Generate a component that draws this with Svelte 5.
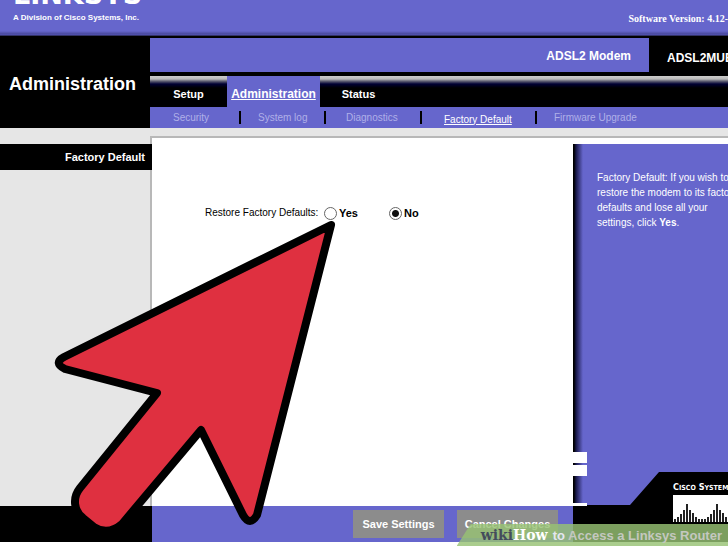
<script>
  const tabs = ['Setup', 'Administration', 'Status'];
  const pages = ['Security', 'System log', 'Diagnostics', 'Factory Default', 'Firmware Upgrade'];
  const bars = [3, 5, 8, 12, 18, 12, 9, 5, 3, 3, 3, 5, 8, 12, 18, 12, 9, 5, 3, 3];
  let restore = $state('no');
</script>

<div class="page">
  <header class="brand">
    <div>
      <div class="logo">LINKSYS</div>
      <div class="division">A Division of Cisco Systems, Inc.</div>
    </div>
    <div class="version">Software Version: 4.12-</div>
  </header>

  <section class="top">
    <h1>Administration</h1>
    <div class="navs">
      <div class="product">
        <div class="modem">ADSL2 Modem</div>
        <div class="model">ADSL2MUE</div>
      </div>
      <nav class="tabs">
        {#each tabs as tab, i}
          <a href="#{tab}" class:active={i === 1}>{tab}</a>
        {/each}
      </nav>
      <nav class="pages">
        {#each pages as page, i}
          <a href="#{page}" class="p{i}" class:current={i === 3}>{page}</a>
          {#if i < 4}<i></i>{/if}
        {/each}
      </nav>
    </div>
  </section>

  <div class="band"><div></div></div>

  <div class="body">
    <aside class="side"><h2>Factory Default</h2></aside>
    <main>
      <fieldset>
        <legend>Restore Factory Defaults:</legend>
        <label><input type="radio" name="restore" value="yes" bind:group={restore} />Yes</label>
        <label><input type="radio" name="restore" value="no" bind:group={restore} />No</label>
      </fieldset>
    </main>
    <aside class="help">
      <p>Factory Default: If you wish to<br />restore the modem to its factory<br />defaults and lose all your<br />settings, click <b>Yes</b>.</p>
      <div class="notches"><span></span><span></span></div>
      <div class="corner">
        <svg viewBox="0 0 155 34" width="155" height="34" aria-hidden="true">
          <path d="M0 33H57L86 0H155V34H0Z" fill="#000" />
          <path d="M0 31H14V34H0Z" fill="#fff" />
        </svg>
      </div>
    </aside>
  </div>

  <footer>
    <div class="foot-left"></div>
    <div class="actions">
      <button type="button">Save Settings</button>
      <button type="button">Cancel Changes</button>
    </div>
    <div class="foot-right"></div>
  </footer>

  <div class="cisco">
    <div>C<small>ISCO</small> S<small>YSTEMS</small></div>
    <svg width="64" height="27" viewBox="0 0 64 27" aria-hidden="true">
      <rect width="64" height="27" fill="#fff" />
      {#each bars as h, i}
        <rect x={1 + i * 3} y={27 - h} width="2" height={h} fill="#222" />
      {/each}
    </svg>
  </div>

  <svg class="pointer" viewBox="0 0 290 320" width="290" height="320" aria-hidden="true">
    <path
      d="M281 15L14 147Q3 153 15 159L107 183L30 278C22 288 24 301 33 308L44 317Q58 326 72 314L151 220L193 305Q200 317 207 305Z"
      transform="translate(0 -5)"
      fill="#df3040"
      stroke="#000"
      stroke-width="8"
      stroke-linejoin="round"
    />
  </svg>

  <div class="caption">
    <span class="wiki">wiki</span><span class="how">How</span><span class="title"><span class="how-to">to</span> Access a Linksys Router</span>
  </div>
</div>

<style>
  :global(body) {
    margin: 0;
    background: #fff;
  }
  .page {
    position: relative;
    overflow: hidden;
    padding-bottom: 4px;
    font-family: 'Liberation Sans', Arial, sans-serif;
    font-size: 12px;
    white-space: nowrap;
  }
  h1, h2, p, fieldset, legend {
    margin: 0;
    padding: 0;
    border: 0;
  }
  a {
    text-decoration: none;
  }
  .brand {
    display: flex;
    justify-content: space-between;
    height: 36px;
    box-sizing: border-box;
    padding-left: 13px;
    background: linear-gradient(#6666cc 31px, #48489c 34px, #5555bb 35px, #111 36px);
    color: #fff;
    font-weight: bold;
    overflow: hidden;
  }
  .logo {
    height: 12px;
    display: flex;
    align-items: flex-end;
    font: bold 27px/34px 'DejaVu Sans', sans-serif;
  }
  .division {
    font-size: 8px;
    line-height: 11px;
  }
  .version {
    padding-top: 12px;
    font: bold 10px/14px 'Liberation Serif', serif;
  }
  .top {
    display: flex;
    background: #000;
    color: #fff;
  }
  h1 {
    width: 150px;
    box-sizing: border-box;
    padding: 36px 0 0 9px;
    font-size: 18px;
    line-height: 24px;
  }
  .navs {
    flex: 1;
    min-width: 0;
  }
  .product {
    display: flex;
    padding: 2px 0 4px;
    font-size: 12px;
    line-height: 36px;
    font-weight: bold;
  }
  .modem {
    flex: 1;
    height: 34px;
    padding-right: 18px;
    background: #6666cc;
    text-align: right;
  }
  .model {
    width: 61px;
    padding-left: 18px;
    line-height: 40px;
    height: 34px;
  }
  .tabs {
    display: flex;
    height: 31px;
    background: linear-gradient(#ccc 0, #bbb 3px, #667 5px, #003 8px, #000 12px);
    font-size: 11px;
    line-height: 37px;
    font-weight: bold;
  }
  .tabs a {
    width: 77px;
    color: #fff;
    text-align: center;
  }
  .tabs a.active {
    width: 93px;
    background: #6666cc;
    font-size: 12px;
    text-decoration: underline;
  }
  .pages {
    display: flex;
    align-items: center;
    height: 21px;
    padding-left: 23px;
    background: #6666cc;
    font-size: 10px;
  }
  .pages a {
    width: 66px;
    color: #b0b0e8;
  }
  .pages i {
    width: 2px;
    height: 13px;
    margin-right: 17px;
    background: #000;
  }
  .pages .p2 {
    width: 74px;
    margin-left: 3px;
  }
  .pages .p3 {
    width: 91px;
    margin-left: 5px;
  }
  .pages .p4 {
    width: auto;
  }
  .pages .current {
    color: #fff;
    line-height: 17px;
    padding-top: 3px;
    text-decoration: underline;
  }
  .band {
    height: 10px;
    padding-left: 150px;
    background: #e6e6e6;
  }
  .band div {
    height: 8px;
    border-bottom: 2px solid #b8b8b8;
  }
  .body {
    display: flex;
    height: 368px;
  }
  .side {
    width: 150px;
    border-right: 2px solid #b8b8b8;
    background: #e6e6e6;
    padding-top: 6px;
  }
  h2 {
    margin-right: -2px;
    padding-right: 7px;
    background: #000;
    color: #fff;
    font-size: 11px;
    line-height: 26px;
    text-align: right;
  }
  main {
    flex: 1;
    padding: 62px 0 0 53px;
  }
  fieldset {
    display: flex;
    align-items: center;
    line-height: 20px;
  }
  legend {
    float: left;
    width: 119px;
    font-size: 10px;
    line-height: 26px;
  }
  label {
    display: flex;
    align-items: center;
    width: 65px;
    font-size: 11px;
    font-weight: bold;
  }
  input {
    appearance: none;
    width: 13px;
    height: 13px;
    margin: 0 2px 0 0;
    border: 1px solid #666;
    border-radius: 50%;
    background: #fff;
  }
  input:checked {
    background: radial-gradient(circle, #111 3px, #fff 4px);
  }
  .help {
    display: flex;
    flex-direction: column;
    width: 155px;
    margin-top: 6px;
    background: linear-gradient(90deg, #000 1px, #181848 3px, #6666cc 10px);
    color: #fff;
    overflow: hidden;
  }
  .help p {
    padding: 26px 0 0 24px;
    font-size: 10px;
    line-height: 15px;
  }
  .notches {
    display: flex;
    flex-direction: column;
    gap: 2px;
    margin-top: auto;
  }
  .notches span {
    width: 14px;
    height: 11px;
    background: #fff;
  }
  .corner {
    display: flex;
    margin-top: -4px;
  }
  footer {
    display: flex;
    height: 36px;
    background: #6666cc;
  }
  .foot-left {
    width: 152px;
    background: #000;
  }
  .foot-right {
    width: 155px;
    background: #000;
  }
  .actions {
    flex: 1;
    display: flex;
    justify-content: flex-end;
    gap: 13px;
    padding: 4px 15px;
  }
  button {
    width: 91px;
    height: 28px;
    border: 0;
    padding: 0;
    background: #8c8c8c;
    color: #fff;
    font: bold 11px 'Liberation Sans', Arial, sans-serif;
  }
  button + button {
    width: 101px;
  }
  .cisco {
    position: absolute;
    right: -9px;
    bottom: 24px;
    width: 64px;
    color: #fff;
    font: bold 9px/13px 'DejaVu Sans Condensed', sans-serif;
  }
  .cisco small {
    font-size: 7px;
  }
  .cisco svg {
    display: block;
  }
  .pointer {
    position: absolute;
    left: 50px;
    top: 215px;
  }
  .caption {
    position: absolute;
    right: 0;
    bottom: 0;
    display: flex;
    align-items: center;
    height: 22px;
    padding: 0 6px 0 24px;
    background: rgba(151, 194, 116, 0.82);
    clip-path: polygon(14px 0, 100% 0, 100% 100%, 0 100%);
    color: #c4c8c0;
    font-size: 13px;
    font-weight: bold;
  }
  .wiki,
  .how {
    font: bold 14px 'DejaVu Serif', serif;
  }
  .wiki {
    color: #444c5c;
  }
  .how {
    color: #fff;
  }
  .how-to {
    color: #e4e6f0;
  }
  .title {
    margin-left: 5px;
  }
</style>
